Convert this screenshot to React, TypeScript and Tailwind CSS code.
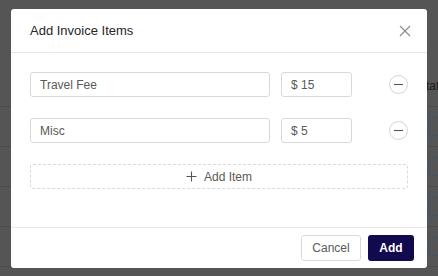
import React from "react";

function Minus() {
  return (
    <button className="w-[19px] h-[19px] rounded-full border border-[#d4d4d4] bg-white flex items-center justify-center shrink-0">
      <svg width="11" height="11" viewBox="0 0 11 11">
        <line x1="1" y1="5.5" x2="10" y2="5.5" stroke="#555" strokeWidth="1.1" />
      </svg>
    </button>
  );
}

function Row({ name, price }: { name: string; price: string }) {
  return (
    <div className="flex items-center">
      <div className="w-[240px] h-[25px] border border-[#d9d9d9] rounded-[3px] flex items-center px-[9px] text-[12px] text-[#595959]">
        {name}
      </div>
      <div className="ml-[11px] w-[71px] h-[25px] border border-[#d9d9d9] rounded-[3px] flex items-center px-[9px] text-[12px] text-[#595959]">
        {price}
      </div>
      <div className="flex-1" />
      <Minus />
    </div>
  );
}

export default function App() {
  return (
    <div
      className="relative w-[438px] h-[276px] overflow-hidden bg-[#555555]"
      style={{ fontFamily: '"Liberation Sans", Arial, sans-serif' }}
    >
      {/* dimmed page behind */}
      <div className="flex flex-col">
        <div className="h-[107px] border-b border-[#4b4b4b] flex items-end justify-end pb-[11px]">
          <span className="text-[12px] text-[#1a1a1a] mr-[-14px]">Status</span>
        </div>
        {[0, 1, 2, 3].map((i) => (
          <div key={i} className="h-[40px] border-b border-[#4b4b4b] flex items-center justify-end">
            <div className="w-[30px] h-[19px] mr-[-20px] rounded-[3px] border border-[#3c5670]" />
          </div>
        ))}
      </div>

      {/* modal */}
      <div className="absolute left-[11px] top-[9px] w-[416px] h-[259px] bg-white rounded-[3px] flex flex-col">
        <div className="h-[44px] px-[19px] flex items-center justify-between border-b border-[#e8e8e8]">
          <span className="text-[13px] text-[#262626]">Add Invoice Items</span>
          <svg width="12" height="12" viewBox="0 0 12 12" className="mr-[-3px]">
            <path d="M1 1 L11 11 M11 1 L1 11" stroke="#8c8c8c" strokeWidth="1.2" />
          </svg>
        </div>
        <div className="flex-1 px-[19px] pt-[19px] flex flex-col gap-[21px]">
          <Row name="Travel Fee" price="$ 15" />
          <Row name="Misc" price="$ 5" />
          <div className="h-[25px] border border-dashed border-[#d9d9d9] rounded-[3px] flex items-center justify-center text-[12px] text-[#595959] gap-[7px]">
            <svg width="11" height="11" viewBox="0 0 11 11">
              <path d="M5.5 0.5 V10.5 M0.5 5.5 H10.5" stroke="#555" strokeWidth="1.1" />
            </svg>
            <span>Add Item</span>
          </div>
        </div>
        <div className="h-[41px] border-t border-[#e8e8e8] flex items-center justify-end pr-[13px] gap-[7px]">
          <button className="h-[26px] w-[60px] rounded-[3px] border border-[#d9d9d9] bg-white text-[12px] text-[#595959]">
            Cancel
          </button>
          <button className="h-[26px] w-[46px] rounded-[3px] bg-[#120a4f] text-[12px] text-white font-bold">
            Add
          </button>
        </div>
      </div>
    </div>
  );
}
